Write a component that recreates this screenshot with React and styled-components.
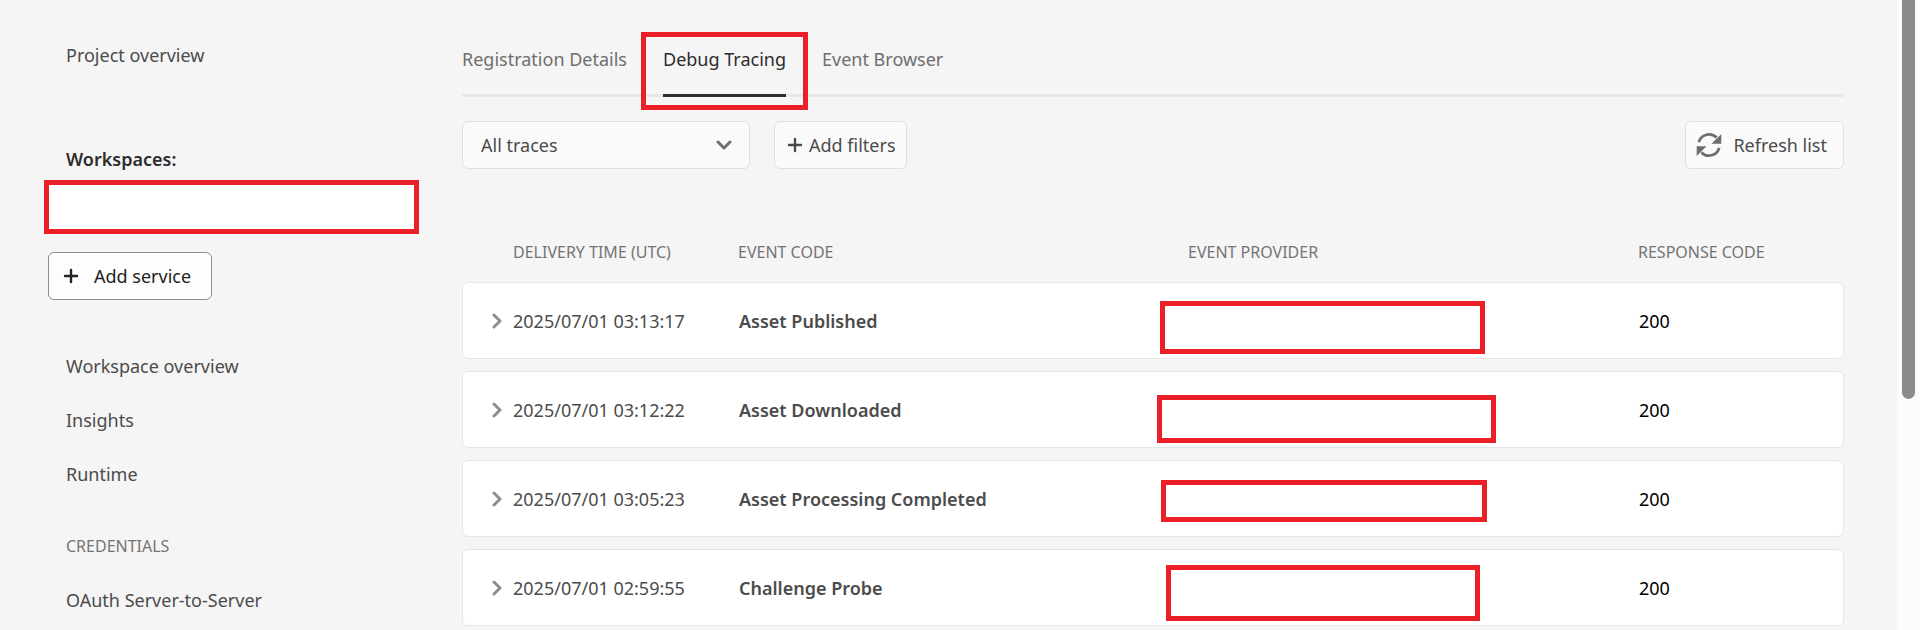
import React, { useState } from "react";
import styled, { createGlobalStyle } from "styled-components";

const GlobalStyle = createGlobalStyle`
  * {
    box-sizing: border-box;
  }

  body {
    margin: 0;
    background-color: #f5f5f5;
    color: #4b4b4b;
    font-family: "Noto Sans", "Open Sans", sans-serif;
    font-size: 18px;
    line-height: 24px;
  }

  button,
  select {
    font: inherit;
    color: inherit;
    cursor: pointer;
  }
`;

const Page = styled.div`
  display: flex;
  height: 100vh;
  overflow: hidden;
`;

const Sidebar = styled.aside`
  flex: 0 0 462px;
  padding: 28px 43px 0 44px;
`;

const NavLink = styled.a`
  display: block;
  padding: 15px 22px;
  color: #4b4b4b;
  text-decoration: none;

  &:hover {
    color: #000;
  }
`;

const NavHeading = styled.h2`
  margin: 18px 0 0;
  padding: 15px 22px;
  color: #747474;
  font-size: 16px;
  font-weight: 400;
  line-height: 24px;
`;

const WorkspaceTitle = styled.h2`
  margin: 64px 0 8px;
  padding: 0 22px;
  color: #2c2c2c;
  font-size: 18px;
  font-weight: 600;
  line-height: 26px;
`;

const WorkspaceMark = styled.div`
  height: 54px;
  border: 5px solid #ea1f28;
  background-color: #fff;
`;

const Button = styled.button`
  display: inline-flex;
  align-items: center;
  height: 48px;
  padding: 0 10px 0 12px;
  gap: 6px;
  border: 1px solid #e0e0e0;
  border-radius: 6px;
  background-color: #fafafa;
  color: #4b4b4b;
  white-space: nowrap;
`;

const ServiceButton = styled(Button)`
  margin: 18px 4px 39px;
  padding: 0 20px 0 14px;
  gap: 15px;
  border-color: #8e8e8e;
  background-color: #fdfdfd;
  color: #222;
`;

const RefreshButton = styled(Button)`
  margin-left: auto;
  padding: 0 16px 0 10px;
  gap: 11px;
`;

const Main = styled.main`
  flex: 1;
  min-width: 0;
  padding: 32px 53px 0 0;
`;

const Tabs = styled.div`
  display: flex;
  gap: 36px;
  border-bottom: 3px solid #e8e8e8;
`;

const Tab = styled.button`
  position: relative;
  height: 65px;
  margin-bottom: -3px;
  padding: 0 0 8px;
  border: none;
  border-bottom: 3px solid
    ${(props) => (props.$active ? "#2c2c2c" : "transparent")};
  background: none;
  color: ${(props) => (props.$active ? "#2c2c2c" : "#6e6e6e")};
  white-space: nowrap;
`;

const TabMark = styled.span`
  position: absolute;
  inset: 0 -22px -16px;
  border: 5px solid #ea1f28;
  pointer-events: none;
`;

const Toolbar = styled.div`
  display: flex;
  gap: 24px;
  margin-top: 24px;
`;

const SelectWrapper = styled.div`
  position: relative;
  width: 288px;

  svg {
    position: absolute;
    right: 18px;
    top: 19px;
    pointer-events: none;
  }
`;

const Select = styled.select`
  appearance: none;
  width: 100%;
  height: 48px;
  padding: 0 40px 0 18px;
  border: 1px solid #e0e0e0;
  border-radius: 6px;
  background-color: #fafafa;
`;

const Table = styled.table`
  display: block;
  margin-top: 70px;
`;

const TableHead = styled.thead`
  display: block;
`;

const TableBody = styled.tbody`
  display: grid;
  gap: 12px;
`;

const Row = styled.tr`
  display: grid;
  grid-template-columns: 1fr 2fr 2fr 1fr;
  padding: 0 15px;
  border: 1px solid transparent;
`;

const CardRow = styled(Row)`
  height: 77px;
  border-color: #e6e6e6;
  border-radius: 6px;
  background-color: #fff;
`;

const HeadCell = styled.th`
  padding: 0 0 17px 35px;
  color: #747474;
  font-size: 16px;
  font-weight: 400;
  line-height: 24px;
  text-align: left;
  white-space: nowrap;
`;

const Cell = styled.td`
  position: relative;
  display: flex;
  align-items: center;
  padding: 0 0 0 36px;
  color: ${(props) => props.$color || "#4b4b4b"};
  font-weight: ${(props) => (props.$strong ? 600 : 400)};
  white-space: nowrap;
`;

const TimeCell = styled(Cell)`
  padding-left: 5px;
  gap: 2px;
`;

const ExpandButton = styled.button`
  display: flex;
  align-items: center;
  justify-content: center;
  width: 28px;
  height: 28px;
  padding: 0;
  border: none;
  background: none;
  transform: rotate(${(props) => (props.$open ? "90deg" : "0deg")});
`;

// hand-drawn box that covers the provider name
const ProviderMark = styled.span`
  position: absolute;
  left: ${(props) => props.$box.left}px;
  top: ${(props) => props.$box.top}px;
  width: ${(props) => props.$box.width}px;
  height: ${(props) => props.$box.height}px;
  border: 5px solid #ea1f28;
  background-color: #fff;
`;

const ScrollTrack = styled.div`
  flex: 0 0 23px;
  padding: 0 5px;
  background-color: #fcfcfc;
`;

const ScrollThumb = styled.div`
  width: 13px;
  height: 399px;
  border-radius: 0 0 7px 7px;
  background-color: #8b8b8b;
`;

const PlusIcon = () => (
  <svg width="16" height="16" viewBox="0 0 16 16" aria-hidden="true">
    <path
      d="M8 2v12M2 8h12"
      fill="none"
      stroke="currentColor"
      strokeWidth="2.4"
      strokeLinecap="round"
    />
  </svg>
);

const ChevronDown = () => (
  <svg width="16" height="10" viewBox="0 0 16 10" aria-hidden="true">
    <path
      d="M2 2l6 6 6-6"
      fill="none"
      stroke="#6e6e6e"
      strokeWidth="3"
      strokeLinecap="round"
      strokeLinejoin="round"
    />
  </svg>
);

const ChevronRight = () => (
  <svg width="10" height="16" viewBox="0 0 10 16" aria-hidden="true">
    <path
      d="M2 2l6 6-6 6"
      fill="none"
      stroke="#8e8e8e"
      strokeWidth="3"
      strokeLinecap="round"
      strokeLinejoin="round"
    />
  </svg>
);

const RefreshIcon = () => (
  <svg width="26" height="26" viewBox="0 0 26 26" aria-hidden="true">
    <path
      d="M2.8 10.2A10.6 10.6 0 0 1 20.6 5.6M23.2 15.8A10.6 10.6 0 0 1 5.4 20.4"
      fill="none"
      stroke="#6e6e6e"
      strokeWidth="2.8"
    />
    <path d="M25.3 2v9.8h-9.8zM0.7 24v-9.8h9.8z" fill="#6e6e6e" />
  </svg>
);

const tabs = ["Registration Details", "Debug Tracing", "Event Browser"];

const workspaceLinks = ["Workspace overview", "Insights", "Runtime"];

const traces = [
  {
    time: "2025/07/01 03:13:17",
    code: "Asset Published",
    status: 200,
    box: { left: 7, top: 18, width: 325, height: 53 },
  },
  {
    time: "2025/07/01 03:12:22",
    code: "Asset Downloaded",
    status: 200,
    box: { left: 4, top: 23, width: 339, height: 48 },
  },
  {
    time: "2025/07/01 03:05:23",
    code: "Asset Processing Completed",
    status: 200,
    box: { left: 8, top: 19, width: 326, height: 42 },
  },
  {
    time: "2025/07/01 02:59:55",
    code: "Challenge Probe",
    status: 200,
    box: { left: 13, top: 15, width: 314, height: 56 },
  },
];

const TraceRow = ({ trace }) => {
  const [isOpen, setIsOpen] = useState(false);

  return (
    <CardRow>
      <TimeCell>
        <ExpandButton
          $open={isOpen}
          aria-expanded={isOpen}
          aria-label="Details"
          onClick={() => setIsOpen(!isOpen)}
        >
          <ChevronRight />
        </ExpandButton>
        {trace.time}
      </TimeCell>
      <Cell $strong>{trace.code}</Cell>
      <Cell>
        <ProviderMark $box={trace.box} />
      </Cell>
      <Cell $color="#000">{trace.status}</Cell>
    </CardRow>
  );
};

const App = () => {
  const [activeTab, setActiveTab] = useState("Debug Tracing");

  return (
    <>
      <GlobalStyle />
      <Page>
        <Sidebar>
          <NavLink href="#project">Project overview</NavLink>
          <WorkspaceTitle>Workspaces:</WorkspaceTitle>
          <WorkspaceMark />
          <ServiceButton>
            <PlusIcon />
            Add service
          </ServiceButton>
          <nav>
            {workspaceLinks.map((item) => (
              <NavLink key={item} href="#workspace">
                {item}
              </NavLink>
            ))}
          </nav>
          <NavHeading>CREDENTIALS</NavHeading>
          <NavLink href="#oauth">OAuth Server-to-Server</NavLink>
        </Sidebar>

        <Main>
          <Tabs role="tablist">
            {tabs.map((item) => (
              <Tab
                key={item}
                role="tab"
                aria-selected={activeTab === item}
                $active={activeTab === item}
                onClick={() => setActiveTab(item)}
              >
                {item}
                {activeTab === item && <TabMark />}
              </Tab>
            ))}
          </Tabs>

          <Toolbar>
            <SelectWrapper>
              <Select aria-label="Traces">
                <option>All traces</option>
              </Select>
              <ChevronDown />
            </SelectWrapper>
            <Button>
              <PlusIcon />
              Add filters
            </Button>
            <RefreshButton>
              <RefreshIcon />
              Refresh list
            </RefreshButton>
          </Toolbar>

          <Table>
            <TableHead>
              <Row>
                <HeadCell>DELIVERY TIME (UTC)</HeadCell>
                <HeadCell>EVENT CODE</HeadCell>
                <HeadCell>EVENT PROVIDER</HeadCell>
                <HeadCell>RESPONSE CODE</HeadCell>
              </Row>
            </TableHead>
            <TableBody>
              {traces.map((trace) => (
                <TraceRow key={trace.time} trace={trace} />
              ))}
            </TableBody>
          </Table>
        </Main>

        <ScrollTrack>
          <ScrollThumb />
        </ScrollTrack>
      </Page>
    </>
  );
};

export default App;
